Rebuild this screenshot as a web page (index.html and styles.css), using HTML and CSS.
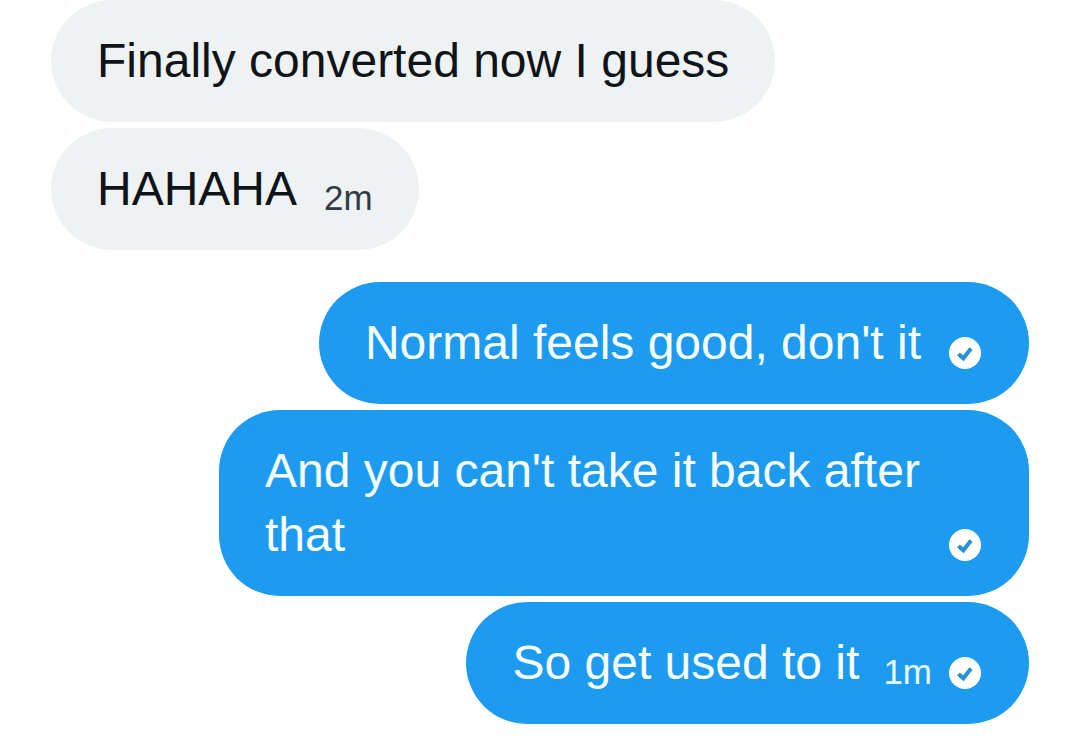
FILE: index.html
```
<!DOCTYPE html>
<html lang="en">
<head>
<meta charset="utf-8">
<meta name="viewport" content="width=device-width, initial-scale=1">
<title>Messages</title>
<link rel="stylesheet" href="styles.css">
</head>
<body>
<main class="chat">
  <section class="group received">
    <div class="bubble"><p class="text">Finally converted now I guess</p></div>
    <div class="bubble"><p class="text">HAHAHA</p><time class="time">2m</time></div>
  </section>
  <section class="group sent">
    <div class="bubble"><p class="text">Normal feels good, don't it</p><svg class="check" viewBox="0 0 32 32" role="img" aria-label="Sent"><circle cx="16" cy="16" r="16"/><path d="M9.500 17l4.800 4.300L22 11.500"/></svg></div>
    <div class="bubble multiline"><p class="text">And you can't take it back after that</p><svg class="check" viewBox="0 0 32 32" role="img" aria-label="Sent"><circle cx="16" cy="16" r="16"/><path d="M9.500 17l4.800 4.300L22 11.500"/></svg></div>
    <div class="bubble"><p class="text">So get used to it</p><time class="time">1m</time><svg class="check" viewBox="0 0 32 32" role="img" aria-label="Sent"><circle cx="16" cy="16" r="16"/><path d="M9.500 17l4.800 4.300L22 11.500"/></svg></div>
  </section>
</main>
</body>
</html>
```
FILE: styles.css
```
* { box-sizing: border-box; }
body { margin: 0; background: #fff; font-family: "Liberation Sans", Arial, sans-serif; }
.chat { display: flex; flex-direction: column; gap: 32px; padding: 0 51px; }
.group { display: flex; flex-direction: column; align-items: flex-start; gap: 6px; }
.sent { align-items: flex-end; }
.bubble { display: flex; align-items: flex-end; max-width: 810px; padding: 29px 46px; border-radius: 61px; background: #eef2f3; color: #0f1419; }
.sent .bubble { background: #1d9bf0; color: #f7ffff; }
.text { margin: 0; font-size: 48px; line-height: 64px; }
.time { margin-left: 27px; font-size: 35px; line-height: 46px; color: #2f3b47; }
.sent .time { margin-left: 24px; color: #e8fbff; }
.check { flex: none; width: 32px; height: 32px; margin: 0 2px 6px 28px; fill: #fff; }
.check path { fill: none; stroke: #2a8fd0; stroke-width: 4; }
.time + .check { margin-left: 17px; }
.multiline .check { margin-left: 20px; }
```
